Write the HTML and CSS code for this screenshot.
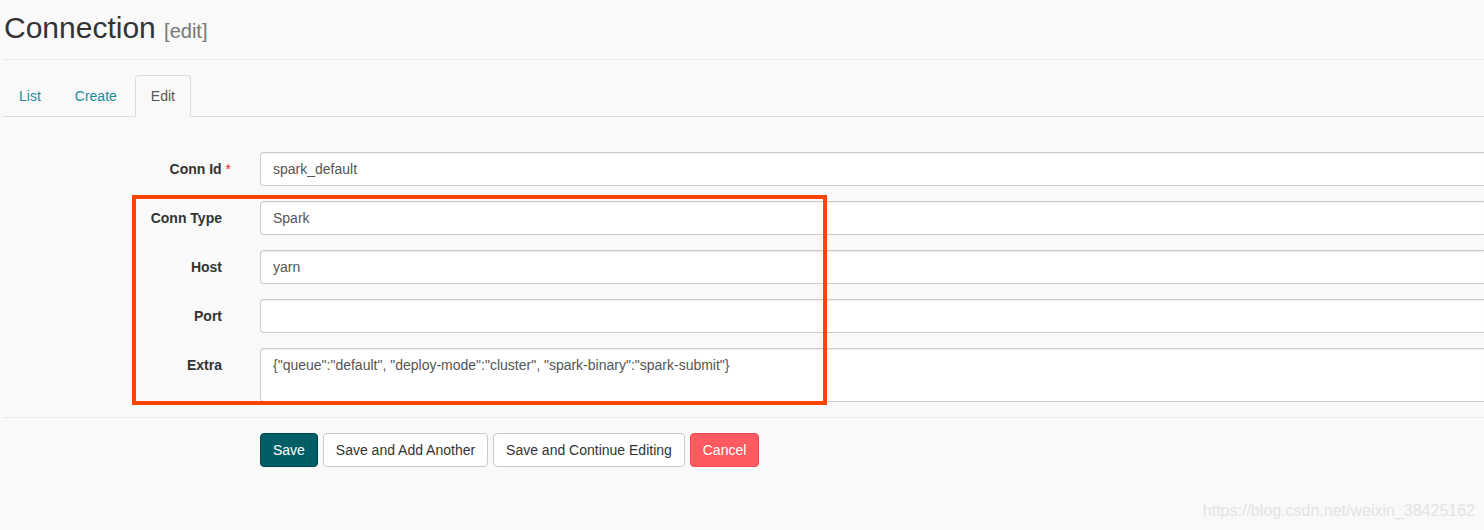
FILE: index.html
```html
<!DOCTYPE html>
<html lang="en">
<head>
<meta charset="UTF-8">
<title>Connection - Edit</title>
<link rel="stylesheet" href="styles.css">
</head>
<body>

<div class="page">
  <h2 class="title">Connection <small>[edit]</small></h2>
  <hr class="rule">

  <ul class="tabs">
    <li><a href="#">List</a></li>
    <li><a href="#">Create</a></li>
    <li class="active"><a href="#">Edit</a></li>
  </ul>

  <form class="form">
    <div class="row">
      <label class="label">Conn Id <span class="req">*</span></label>
      <input class="field" type="text" value="spark_default">
    </div>
    <div class="row">
      <label class="label">Conn Type</label>
      <input class="field" type="text" value="Spark">
    </div>
    <div class="row">
      <label class="label">Host</label>
      <input class="field" type="text" value="yarn">
    </div>
    <div class="row">
      <label class="label">Port</label>
      <input class="field" type="text" value="">
    </div>
    <div class="row">
      <label class="label">Extra</label>
      <textarea class="field area">{"queue":"default", "deploy-mode":"cluster", "spark-binary":"spark-submit"}</textarea>
    </div>

    <div class="mark"></div>

    <hr class="rule bottom">

    <div class="actions">
      <button type="button" class="btn save">Save</button>
      <button type="button" class="btn">Save and Add Another</button>
      <button type="button" class="btn">Save and Continue Editing</button>
      <button type="button" class="btn cancel">Cancel</button>
    </div>
  </form>
</div>

<div class="watermark">https://blog.csdn.net/weixin_38425162</div>

</body>
</html>
```

FILE: styles.css
```css
html, body { margin: 0; height: 100%; }
body { font-family: "Liberation Sans", Arial, sans-serif; font-size: 14px; color: #333; background: #f9f9f9; overflow: hidden; position: relative; }
.page { padding-left: 3px; }

.title { margin: 0; padding-top: 11px; padding-left: 1px; font-size: 30px; font-weight: 400; line-height: 33px; color: #333; }
.title small { font-size: 20px; color: #777; }

.rule { margin: 11px 0 0; border: 0; border-top: 1px solid #e9e9e9; }

.tabs { list-style: none; margin: 15px 0 0; padding: 0; display: flex; border-bottom: 1px solid #ddd; }
.tabs li { margin-bottom: -1px; margin-right: 2px; }
.tabs a { display: block; padding: 10px 15px; line-height: 20px; border: 1px solid transparent; border-radius: 4px 4px 0 0; color: #1b8a9c; text-decoration: none; }
.tabs .active a { color: #555; background: #f9f9f9; border-color: #ddd #ddd transparent; }

.form { position: relative; padding-top: 35px; }
.row { display: grid; grid-template-columns: 219px 1fr; column-gap: 38px; margin-bottom: 15px; }
.label { text-align: right; font-weight: 700; padding-top: 7px; line-height: 20px; }
.req { color: #e8262b; font-weight: 400; margin-right: -9px; }
.field { box-sizing: border-box; width: 100%; height: 34px; padding: 6px 12px; font: 14px/20px "Liberation Sans", Arial, sans-serif; color: #555; background: #fff; border: 1px solid #ccc; border-right: 0; border-radius: 4px 0 0 4px; box-shadow: inset 0 1px 1px rgba(0,0,0,0.075); }
.area { height: 54px; resize: none; overflow: hidden; }

/* red annotation drawn over the form */
.mark { position: absolute; left: 129px; top: 78px; width: 687px; height: 202px; border: 4px solid #ff4400; }

.rule.bottom { margin-top: 0; border-top-color: #eaeaea; }

.actions { padding: 15px 0 0 257px; }
.btn { height: 34px; padding: 6px 12px; margin-right: 1px; font: 14px/20px "Liberation Sans", Arial, sans-serif; color: #333; background: #fff; border: 1px solid #ccc; border-radius: 4px; }
.btn.save { background: #015e66; border-color: #00464d; color: #fff; }
.btn.cancel { background: #ff5a5f; border-color: #f04a50; color: #fff; }

.watermark { position: absolute; right: 9px; bottom: 10px; font-size: 16px; color: #e3e3e3; }
```
